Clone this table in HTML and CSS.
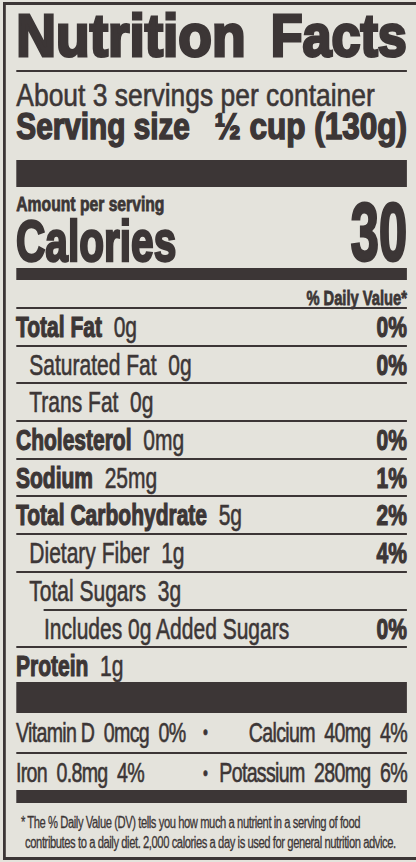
FILE: index.html
```html
<!DOCTYPE html>
<html lang="en">
<head>
    <meta charset="UTF-8">
    <meta name="viewport" content="width=device-width, initial-scale=1.0">
    <title>Nutrition Facts</title>
    <link rel="stylesheet" href="styles.css">
</head>
<body>
    <!-- whole panel is drawn with a normal font, then squeezed to a condensed face -->
    <div class="label">
        <h1 class="label__title"><span class="wide-l">Nutrition</span><span class="wide-r">Facts</span></h1>

        <p class="servings"><span class="wide-l">About 3 servings per container</span></p>
        <p class="serving-size"><span class="wide-l">Serving size</span><span class="wide-r wide-r--more">½ cup (130g)</span></p>

        <div class="bar bar--thick"></div>

        <p class="amount"><span class="wide-l">Amount per serving</span></p>
        <div class="calories">
            <span class="calories__label">Calories</span>
            <span class="calories__value">30</span>
        </div>

        <div class="bar bar--medium"></div>

        <p class="dv-head">% Daily Value*</p>

        <ul class="nutrients">
            <li class="nutrient"><span><b>Total Fat</b>&nbsp; 0g</span><b>0%</b></li>
            <li class="nutrient nutrient--sub"><span>Saturated Fat&nbsp; 0g</span><b>0%</b></li>
            <li class="nutrient nutrient--sub"><span>Trans Fat&nbsp; 0g</span></li>
            <li class="nutrient"><span><b>Cholesterol</b>&nbsp; 0mg</span><b>0%</b></li>
            <li class="nutrient"><span><b>Sodium</b>&nbsp; 25mg</span><b>1%</b></li>
            <li class="nutrient"><span><b>Total Carbohydrate</b>&nbsp; 5g</span><b>2%</b></li>
            <li class="nutrient nutrient--sub"><span>Dietary Fiber&nbsp; 1g</span><b>4%</b></li>
            <li class="nutrient nutrient--sub nutrient--short-line"><span>Total Sugars&nbsp; 3g</span></li>
            <li class="nutrient nutrient--subsub"><span>Includes 0g Added Sugars</span><b>0%</b></li>
            <li class="nutrient nutrient--last"><span><b>Protein</b>&nbsp; 1g</span></li>
        </ul>

        <div class="bar bar--heavy"></div>

        <div class="minerals">
            <div class="minerals__row">
                <span>Vitamin D&nbsp; 0mcg&nbsp; 0%</span>
                <span class="minerals__dot">•</span>
                <span class="minerals__right">Calcium&nbsp; 40mg&nbsp; 4%</span>
            </div>
            <div class="minerals__row minerals__row--last">
                <span>Iron&nbsp; 0.8mg&nbsp; 4%</span>
                <span class="minerals__dot">•</span>
                <span class="minerals__right">Potassium&nbsp; 280mg&nbsp; 6%</span>
            </div>
        </div>

        <div class="bar bar--bottom"></div>

        <p class="footnote">* The % Daily Value (DV) tells you how much a nutrient in a serving of food<br>contributes to a daily diet. 2,000 calories a day is used for general nutrition advice.</p>
    </div>
</body>
</html>
```

FILE: styles.css
```css
* {
    margin: 0;
    padding: 0;
    box-sizing: border-box;
}

html,
body {
    overflow: hidden;
}

body {
    height: 862px;
    background: #e4e3dc;
    color: #3c3636;
    font-family: "Liberation Sans", Arial, sans-serif;
    -webkit-text-stroke: 0.6px #3c3636;
}

/* 590px wide before squeezing, 413px after */
.label {
    width: 590px;
    height: 858px;
    margin: 2px 0 0 3px;
    border: 3px solid #3c3636;
    border-left-width: 4px;
    border-right: none;
    padding: 0 13px 0 14.6px;
    transform: scaleX(0.7);
    transform-origin: 0 0;
}

/* some lines are set wider than the body text */
.wide-l,
.wide-r {
    display: inline-block;
    transform: scaleX(1.18);
}

.wide-l {
    transform-origin: left center;
}

.wide-r {
    transform-origin: right center;
}

.wide-r--more {
    transform: scaleX(1.25);
}

.label__title {
    display: flex;
    justify-content: space-between;
    height: 67px;
    font-size: 60px;
    font-weight: 700;
    line-height: 61px;
    -webkit-text-stroke: 3px #3c3636;
    border-bottom: 2px solid #3c3636;
}

.label__title .wide-l {
    transform: scaleX(1.31);
}

.label__title .wide-r {
    transform: scaleX(1.24);
}

.servings {
    margin-top: 8px;
    font-size: 32px;
    line-height: 30px;
}

.serving-size {
    display: flex;
    justify-content: space-between;
    font-size: 36px;
    font-weight: 700;
    line-height: 34px;
    -webkit-text-stroke: 1.5px #3c3636;
}

.bar {
    background: #3c3636;
}

.bar--thick {
    height: 27px;
    margin-top: 16px;
}

.bar--medium {
    height: 12px;
}

.bar--heavy {
    height: 31px;
}

.bar--bottom {
    height: 13px;
}

.amount {
    margin-top: 7px;
    font-size: 20px;
    font-weight: 700;
    line-height: 20px;
    -webkit-text-stroke: 0.8px #3c3636;
}

.amount .wide-l {
    transform: scaleX(1.12);
}

.calories {
    display: flex;
    justify-content: space-between;
    align-items: flex-end;
    height: 54px;
    font-weight: 700;
}

.calories__label {
    font-size: 58px;
    line-height: 54px;
    -webkit-text-stroke: 2.5px #3c3636;
}

.calories__value {
    display: inline-block;
    font-size: 82px;
    line-height: 72px;
    -webkit-text-stroke: 3px #3c3636;
    transform: scaleX(0.88);
    transform-origin: right center;
}

.dv-head {
    height: 29px;
    padding-top: 8px;
    text-align: right;
    font-size: 21px;
    font-weight: 700;
    line-height: 19px;
    -webkit-text-stroke: 0.8px #3c3636;
    border-bottom: 2px solid #3c3636;
}

.nutrients {
    list-style: none;
}

.nutrient {
    display: flex;
    justify-content: space-between;
    height: 37.7px;
    font-size: 30px;
    line-height: 36px;
    border-bottom: 2px solid #3c3636;
}

.nutrient b {
    font-weight: 700;
    -webkit-text-stroke: 1.2px #3c3636;
}

.nutrient--sub span {
    padding-left: 19px;
}

.nutrient--subsub span {
    padding-left: 40px;
}

/* the rule under Total Sugars starts at the indent */
.nutrient--short-line {
    border-bottom: none;
    background: linear-gradient(#3c3636, #3c3636) no-repeat right bottom / calc(100% - 39px) 2px;
}

.nutrient--last {
    height: 33.7px;
    border-bottom: none;
}

.minerals__row {
    display: grid;
    grid-template-columns: 258px 24px 1fr;
    height: 41px;
    font-size: 28px;
    line-height: 39px;
    letter-spacing: -1px;
    border-bottom: 2px solid #3c3636;
}

.minerals__row--last {
    height: 36px;
    padding-top: 1px;
    line-height: 36px;
    border-bottom: none;
}

.minerals__dot {
    text-align: center;
    font-size: 20px;
}

.minerals__right {
    text-align: right;
}

.footnote {
    padding: 10px 0 0 13px;
    text-indent: -6px;
    font-size: 16px;
    line-height: 20px;
    letter-spacing: -0.6px;
    -webkit-text-stroke: 0.3px #3c3636;
    white-space: nowrap;
}
```
